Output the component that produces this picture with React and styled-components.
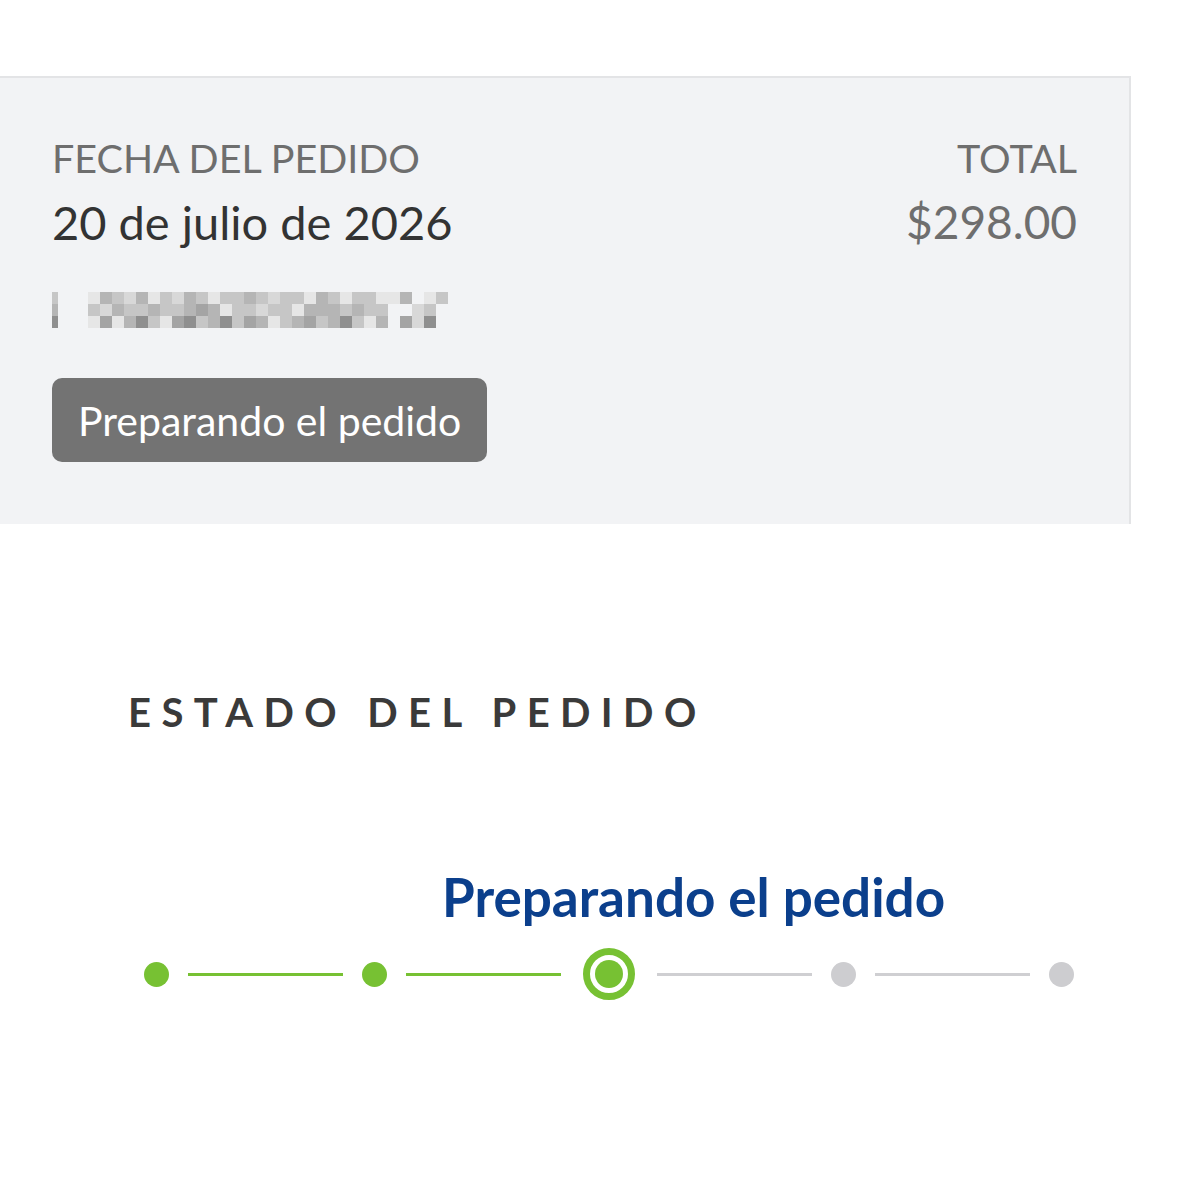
import React from "react";
import styled, { createGlobalStyle } from "styled-components";

const GlobalStyle = createGlobalStyle`
  body {
    margin: 0;
    background: #fff;
    font-family: "Lato", "Noto Sans", sans-serif;
  }
`;

const steps = [
  { state: "done" },
  { state: "done" },
  { state: "current" },
  { state: "todo" },
  { state: "todo" },
];

// pixelated (masked) order number, one letter per 12px cell
const mask = [
  "a00ebalbealbaeaabalaaebaeaaeeb0ea",
  "b00albaabaabcbeaalaaebbbabaa00la",
  "d00ecebdaecdabdacbeabcabdaeb0cld",
];
const shades = {
  e: "#e6e6e6",
  l: "#d8d8d8",
  a: "#c6c6c6",
  b: "#b5b5b5",
  c: "#a4a4a4",
  d: "#8f8f8f",
};

const Page = styled.div`
  width: 1200px;
  height: 1200px;
  padding-top: 76px;
  box-sizing: border-box;
`;

const Card = styled.section`
  width: 1131px;
  height: 448px;
  box-sizing: border-box;
  background: #f2f3f5;
  border-top: 2px solid #e3e4e6;
  border-right: 2px solid #e3e4e6;
  padding: 56px 52px 0 52px;
  display: flex;
  justify-content: space-between;
`;

const Col = styled.div`
  display: flex;
  flex-direction: column;
  align-items: ${(p) => (p.right ? "flex-end" : "flex-start")};
`;

const Label = styled.div`
  font-size: 39.5px;
  line-height: 48px;
  color: #6e6e6e;
`;

const Value = styled.div`
  font-size: ${(p) => (p.muted ? "46px" : "47px")};
  line-height: 60px;
  margin-top: 10px;
  color: ${(p) => (p.muted ? "#6e6e6e" : "#333333")};
`;

const Masked = styled.svg`
  display: block;
  margin-top: 40px;
`;

const Badge = styled.div`
  margin-top: 50px;
  background: #737373;
  color: #fff;
  border-radius: 10px;
  height: 84px;
  padding: 0 26px;
  display: flex;
  align-items: center;
  font-size: 41px;
`;

const Status = styled.section`
  padding: 163px 0 0 128px;
`;

const Title = styled.h2`
  margin: 0;
  font-size: 40px;
  line-height: 50px;
  font-weight: 700;
  letter-spacing: 0.26em;
  color: #3a3a3a;
`;

const Tracker = styled.div`
  margin-top: 130px;
  width: 1200px;
  margin-left: -128px;
`;

const StepLabel = styled.div`
  padding-left: 442px;
  font-size: 53px;
  line-height: 60px;
  font-weight: 700;
  color: #0b3f8c;
`;

const Steps = styled.div`
  display: flex;
  align-items: center;
  margin-top: 20px;
  padding-left: 144px;
  height: 54px;
`;

const Dot = styled.div`
  width: 25px;
  height: 25px;
  border-radius: 50%;
  flex: none;
  background: #cdcdd0;
`;

const DoneDot = styled(Dot)`
  background: #77c133;
`;

const CurrentDot = styled.div`
  width: 52px;
  height: 52px;
  margin: 0 3px;
  box-sizing: border-box;
  border-radius: 50%;
  border: 7px solid #77c133;
  background: #fff;
  display: flex;
  align-items: center;
  justify-content: center;
  flex: none;

  &::after {
    content: "";
    width: 28px;
    height: 28px;
    border-radius: 50%;
    background: #77c133;
  }
`;

const Line = styled.div`
  width: 155px;
  height: 3px;
  flex: none;
  margin: 0 19px;
  background: ${(p) => (p.active ? "#77c133" : "#cfcfd2")};
`;

function StepDot({ state }) {
  if (state === "current") return <CurrentDot />;
  if (state === "done") return <DoneDot />;
  return <Dot />;
}

export default function App() {
  return (
    <Page>
      <GlobalStyle />
      <Card>
        <Col>
          <Label>FECHA DEL PEDIDO</Label>
          <Value>20 de julio de 2026</Value>
          <Masked width="398" height="36" viewBox="0 0 398 36">
            {mask.map((row, r) =>
              row.split("").map((ch, c) =>
                shades[ch] ? (
                  <rect
                    key={`${r}-${c}`}
                    x={c * 12}
                    y={r * 12}
                    width={c === 0 ? 6 : 12}
                    height="12"
                    fill={shades[ch]}
                  />
                ) : null
              )
            )}
          </Masked>
          <Badge>Preparando el pedido</Badge>
        </Col>
        <Col right>
          <Label>TOTAL</Label>
          <Value muted>$298.00</Value>
        </Col>
      </Card>
      <Status>
        <Title>ESTADO DEL PEDIDO</Title>
        <Tracker>
          <StepLabel>Preparando el pedido</StepLabel>
          <Steps>
            {steps.map((s, i) => (
              <React.Fragment key={i}>
                <StepDot state={s.state} />
                {i < steps.length - 1 && (
                  <Line active={steps[i + 1].state !== "todo"} />
                )}
              </React.Fragment>
            ))}
          </Steps>
        </Tracker>
      </Status>
    </Page>
  );
}
